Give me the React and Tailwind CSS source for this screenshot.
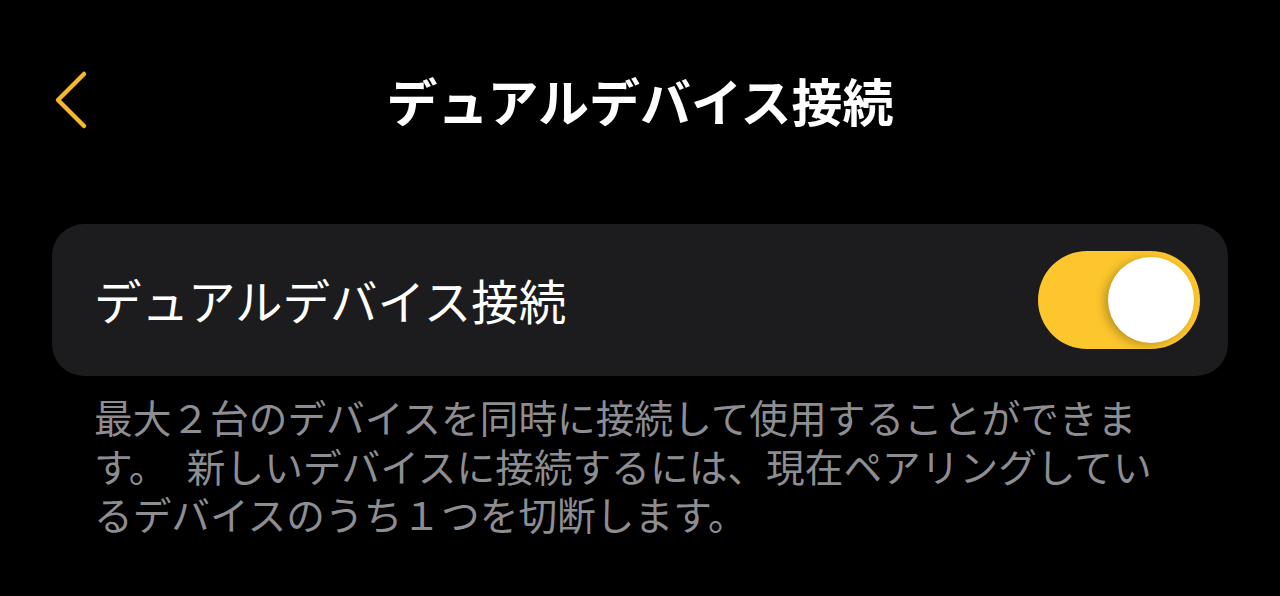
import React from "react";

export default function App() {
  const font = { fontFamily: '"Noto Sans CJK JP", "Noto Sans", sans-serif' };
  return (
    <div className="w-full h-[596px] bg-black text-white overflow-hidden" style={font}>
      <div className="grid grid-cols-[1fr_auto_1fr] items-center h-[100px] mt-[50px]">
        <div className="pl-[50px] flex items-center">
          <svg width="44" height="64" viewBox="0 0 44 64" fill="none">
            <path d="M34 6 L8 32 L34 58" stroke="#f5b72e" strokeWidth="4.5" strokeLinecap="round" strokeLinejoin="round" />
          </svg>
        </div>
        <div className="text-[51px] font-semibold leading-none">デュアルデバイス接続</div>
        <div />
      </div>
      <div className="mx-[52px] mt-[74px] h-[152px] rounded-[32px] bg-[#1c1c1e] flex items-center justify-between pl-[42px] pr-[28px]">
        <div className="text-[47.5px] leading-none">デュアルデバイス接続</div>
        <div className="w-[162px] h-[98px] rounded-full bg-[#fcc62c] flex items-center justify-end pr-[6px]">
          <div className="w-[86px] h-[86px] rounded-full bg-white shadow-[-4px_2px_10px_rgba(0,0,0,0.25)]" />
        </div>
      </div>
      <div className="pl-[94px] mt-[16px] text-[38.7px] leading-[48.5px] text-[#8d8d92]">
        最大２台のデバイスを同時に接続して使用することができま
        <br />
        す。{"\u2002"}新しいデバイスに接続するには、現在ペアリングしてい
        <br />
        るデバイスのうち１つを切断します。
      </div>
    </div>
  );
}
